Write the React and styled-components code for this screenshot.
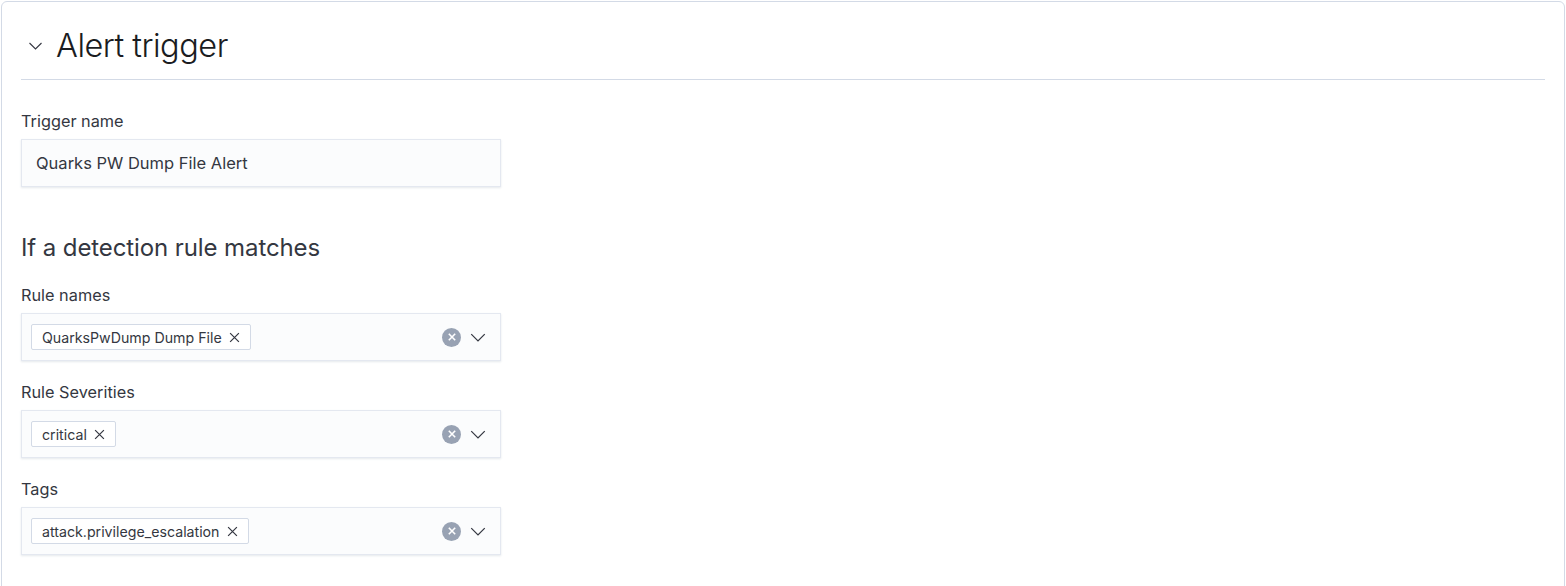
import React from "react";
import styled, { createGlobalStyle } from "styled-components";

const GlobalStyle = createGlobalStyle`
  html, body {
    margin: 0;
    padding: 0;
    background: #fff;
  }
  body {
    font-family: Inter, "Noto Sans", sans-serif;
    color: #343741;
  }
`;

const Page = styled.div`
  padding: 1px 1px 0 1px;
`;

const Panel = styled.section`
  border: 1px solid #d3dae6;
  border-radius: 6px;
  padding: 0 19px 40px 19px;
  min-height: 600px;
  background: #fff;
`;

const Header = styled.div`
  display: flex;
  align-items: center;
  height: 67px;
  padding-top: 10px;
  border-bottom: 1px solid #d3dae6;
`;

const Toggle = styled.button`
  display: flex;
  align-items: center;
  width: 35px;
  height: 30px;
  padding: 0 0 0 7px;
  border: none;
  background: none;
  color: #343741;
  cursor: pointer;
`;

const Title = styled.h2`
  margin: 0;
  font-size: 32.5px;
  font-weight: 300;
  letter-spacing: -0.5px;
  color: #1a1c21;
  line-height: 40px;
`;

const Body = styled.div`
  display: flex;
  flex-direction: column;
  padding-top: 29px;
`;

const Row = styled.div`
  display: flex;
  flex-direction: column;
  width: 480px;
  margin-bottom: ${(p) => p.$gap || 19}px;
`;

const Label = styled.label`
  font-size: 16.3px;
  line-height: 24px;
  color: #343741;
  margin-bottom: 6px;
`;

const SubTitle = styled.h3`
  margin: 0 0 19px 0;
  font-size: 24px;
  font-weight: 400;
  line-height: 32px;
  color: #343741;
  letter-spacing: -0.1px;
`;

const Field = styled.div`
  box-sizing: border-box;
  height: 48px;
  display: flex;
  align-items: center;
  background: #fbfcfd;
  border: 1px solid #e4e8f0;
  box-shadow: 0 1px 2px rgba(152, 162, 179, 0.25);
  padding: 0 14px;
  font-size: 16.5px;
  color: #343741;
`;

const Combo = styled(Field)`
  padding: 0 14px 0 9px;
  justify-content: space-between;
`;

const Pill = styled.span`
  display: inline-flex;
  align-items: center;
  gap: 7px;
  height: 26px;
  box-sizing: border-box;
  padding: 0 10px 0 10px;
  background: #fff;
  border: 1px solid #d3dae6;
  border-radius: 2px;
  font-size: 14.2px;
  color: #343741;
`;

const Controls = styled.div`
  display: flex;
  align-items: center;
  gap: 9px;
`;

const ClearDot = styled.span`
  display: flex;
  align-items: center;
  justify-content: center;
  width: 19px;
  height: 19px;
  border-radius: 50%;
  background: #98a2b3;
`;

const Chevron = ({ w = 15, h = 8 }) => (
  <svg width={w} height={h} viewBox="0 0 14 8" fill="none">
    <path d="M1 1l6 6 6-6" stroke="#343741" strokeWidth="1.1" />
  </svg>
);

const Cross = ({ size = 11, color = "#343741", width = 1.1 }) => (
  <svg width={size} height={size} viewBox="0 0 10 10" fill="none">
    <path d="M1 1l8 8M9 1l-8 8" stroke={color} strokeWidth={width} />
  </svg>
);

const ComboBox = ({ value }) => (
  <Combo>
    <Pill>
      {value}
      <Cross />
    </Pill>
    <Controls>
      <ClearDot>
        <Cross size={8} color="#fff" width={2} />
      </ClearDot>
      <Chevron w={16} h={9} />
    </Controls>
  </Combo>
);

export default function App() {
  return (
    <Page>
      <GlobalStyle />
      <Panel>
        <Header>
          <Toggle>
            <Chevron />
          </Toggle>
          <Title>Alert trigger</Title>
        </Header>
        <Body>
          <Row $gap={45}>
            <Label>Trigger name</Label>
            <Field>Quarks PW Dump File Alert</Field>
          </Row>
          <SubTitle>If a detection rule matches</SubTitle>
          <Row>
            <Label>Rule names</Label>
            <ComboBox value="QuarksPwDump Dump File" />
          </Row>
          <Row>
            <Label>Rule Severities</Label>
            <ComboBox value="critical" />
          </Row>
          <Row>
            <Label>Tags</Label>
            <ComboBox value="attack.privilege_escalation" />
          </Row>
        </Body>
      </Panel>
    </Page>
  );
}
